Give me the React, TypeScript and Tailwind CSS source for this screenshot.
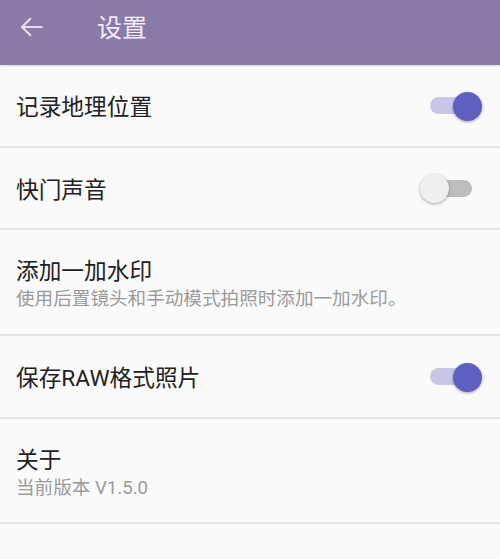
import React from "react";

function Toggle({ on }: { on: boolean }) {
  return (
    <div className="relative w-[54px] h-[30px] flex items-center">
      <div
        className={
          "absolute left-[1px] right-[11px] h-[17px] rounded-full " +
          (on ? "bg-[#c7c7e8]" : "bg-[#bdbdbd]")
        }
      />
      <div
        className={
          "absolute top-[1px] w-[29px] h-[29px] rounded-full shadow-[0_1px_3px_rgba(0,0,0,0.35)] " +
          (on ? "left-[24px] bg-[#5e5fc0]" : "left-[-9px] bg-[#efefef]")
        }
      />
    </div>
  );
}

function Row({
  title,
  sub,
  toggle,
  h,
}: {
  title: string;
  sub?: string;
  toggle?: boolean;
  h: string;
}) {
  return (
    <div className={"flex items-center justify-between pl-4 pr-[17px] border-b-2 border-[#e3e3e3] " + h}>
      <div className="flex flex-col pt-[5px]">
        <div className="text-[22.7px] leading-[28px] text-[#212121]">{title}</div>
        {sub && <div className="text-[18.6px] leading-[24px] text-[#9a9a9a] mt-[1px]">{sub}</div>}
      </div>
      {toggle !== undefined && <Toggle on={toggle} />}
    </div>
  );
}

export default function App() {
  return (
    <div
      className="w-[500px] h-[559px] bg-[#fafafa] overflow-hidden"
      style={{ fontFamily: 'Roboto, "Noto Sans CJK SC", sans-serif' }}
    >
      <div className="h-[65px] bg-[#8a7aa8] flex items-center shadow-[0_1px_2px_rgba(0,0,0,0.15)] pb-[12px]">
        <svg width="28" height="28" viewBox="0 0 24 24" className="ml-[18px]" fill="none" stroke="#e6dcef" strokeWidth="1.9">
          <path d="M21 12H3.5M11 4.5L3.5 12l7.5 7.5" />
        </svg>
        <div className="ml-[51px] text-[25px] text-[#f1ecf5] leading-none pt-[3px]">设置</div>
      </div>
      <Row title="记录地理位置" toggle={true} h="h-[83px]" />
      <Row title="快门声音" toggle={false} h="h-[82px]" />
      <Row title="添加一加水印" sub="使用后置镜头和手动模式拍照时添加一加水印。" h="h-[106px]" />
      <Row title="保存RAW格式照片" toggle={true} h="h-[83px]" />
      <Row title="关于" sub="当前版本 V1.5.0" h="h-[105px]" />
    </div>
  );
}
